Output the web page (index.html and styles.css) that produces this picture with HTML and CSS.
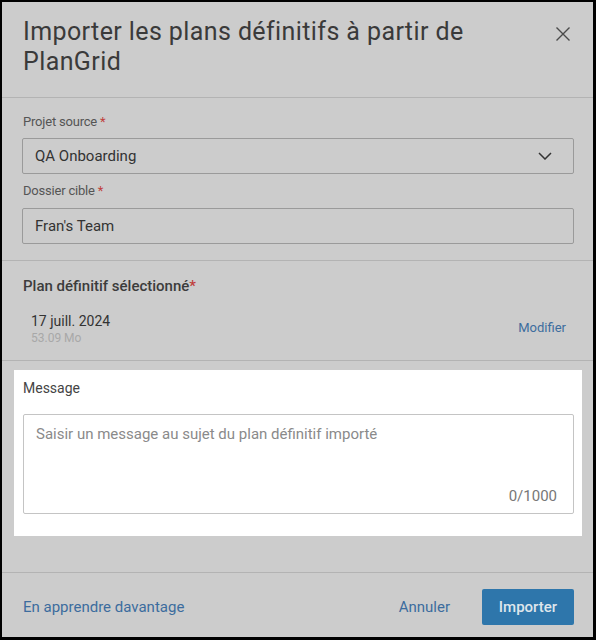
FILE: index.html
```html
<!DOCTYPE html>
<html lang="fr">
<head>
<meta charset="utf-8">
<title>Importer les plans définitifs</title>
<link rel="stylesheet" href="styles.css">
</head>
<body>
<div class="dialog">
  <header class="header">
    <h1 class="title">Importer les plans définitifs à partir de PlanGrid</h1>
    <button class="close" aria-label="Fermer">
      <svg width="16" height="16" viewBox="0 0 16 16"><path d="M1.5 1.5 L14.5 14.5 M14.5 1.5 L1.5 14.5" stroke="#4a4a4a" stroke-width="1.4" fill="none"/></svg>
    </button>
  </header>

  <section class="form">
    <label class="label">Projet source <span class="req">*</span></label>
    <div class="field select">
      <span>QA Onboarding</span>
      <svg class="chev" width="14" height="8" viewBox="0 0 14 8"><path d="M1 1 L7 7 L13 1" stroke="#333" stroke-width="1.5" fill="none"/></svg>
    </div>
    <label class="label second">Dossier cible <span class="req">*</span></label>
    <div class="field"><span>Fran's Team</span></div>
  </section>

  <section class="plan">
    <div class="plan-title">Plan définitif sélectionné<span class="req">*</span></div>
    <div class="plan-row">
      <div class="plan-info">
        <div class="plan-date">17 juill. 2024</div>
        <div class="plan-size">53.09 Mo</div>
      </div>
      <a class="link modify">Modifier</a>
    </div>
  </section>

  <section class="message">
    <div class="label msg-label">Message</div>
    <div class="textarea">
      <span class="placeholder">Saisir un message au sujet du plan définitif importé</span>
      <span class="count">0/1000</span>
    </div>
  </section>

  <footer class="footer">
    <a class="link learn">En apprendre davantage</a>
    <div class="actions">
      <a class="link cancel">Annuler</a>
      <button class="primary">Importer</button>
    </div>
  </footer>
</div>
</body>
</html>
```

FILE: styles.css
```css
* { box-sizing: border-box; }
html, body { margin: 0; padding: 0; }
body {
  background: #000;
  padding: 2px 3px 3px 2px;
  font-family: Roboto, "Noto Sans", sans-serif;
  color: #383838;
}
.dialog {
  width: 591px;
  height: 635px;
  background: #cccccc;
  display: flex;
  flex-direction: column;
}
.header {
  display: flex;
  justify-content: space-between;
  align-items: flex-start;
  padding: 15px 22px 20px 21px;
  border-bottom: 1px solid #b3b3b3;
}
.title {
  margin: 0;
  font-weight: 400;
  font-size: 25px;
  letter-spacing: 0.4px;
  line-height: 30px;
  color: #3a3a3a;
  width: 480px;
}
.close {
  border: 0;
  background: none;
  padding: 0;
  margin-top: 9px;
  width: 16px;
  height: 16px;
  display: flex;
}
.form {
  padding: 15px 19px 16px 20px;
  border-bottom: 1px solid #b3b3b3;
  display: flex;
  flex-direction: column;
}
.label {
  font-size: 13px;
  letter-spacing: -0.2px;
  line-height: 18px;
  color: #555;
  margin: 0 0 7px 1px;
}
.label.second { margin-top: 8px; margin-bottom: 8px; }
.req { color: #c0403c; }
.field {
  height: 36px;
  border: 1px solid #9a9a9a;
  border-radius: 2px;
  display: flex;
  align-items: center;
  justify-content: space-between;
  padding: 0 21px 0 12px;
  font-size: 15px;
  color: #333;
}
.chev { display: block; }
.plan {
  padding: 15px 27px 14px 21px;
  border-bottom: 1px solid #b3b3b3;
}
.plan-title {
  font-size: 15px;
  line-height: 20px;
  font-weight: 500;
  color: #3c3c3c;
}
.plan-row {
  display: flex;
  justify-content: space-between;
  align-items: center;
  margin-top: 16px;
  padding-left: 8px;
}
.plan-date { font-size: 14px; line-height: 18px; color: #333; }
.plan-size { font-size: 12px; line-height: 16px; color: #a8a8a8; }
.link {
  color: #3c6c9e;
  font-size: 13px;
  cursor: pointer;
}
.modify { margin-top: -4px; }
.message {
  background: #fff;
  margin: 9px 11px 0 12px;
  padding: 9px 8px 22px 9px;
}
.msg-label { margin: 0 0 17px 0; color: #444; font-size: 14px; letter-spacing: 0; }
.textarea {
  height: 100px;
  border: 1px solid #c4c4c4;
  border-radius: 2px;
  padding: 10px 16px 8px 12px;
  display: flex;
  flex-direction: column;
  justify-content: space-between;
  font-size: 15px;
}
.placeholder { color: #8a8a8a; }
.count { align-self: flex-end; color: #777; font-size: 15px; }
.footer {
  margin-top: auto;
  border-top: 1px solid #b3b3b3;
  height: 65px;
  display: flex;
  align-items: center;
  justify-content: space-between;
  padding: 3px 19px 0 21px;
}
.learn { font-size: 15px; }
.actions { display: flex; align-items: center; gap: 32px; }
.cancel { font-size: 15px; }
.primary {
  width: 92px;
  height: 36px;
  border: 0;
  border-radius: 2px;
  background: #2e76ab;
  color: #dfe6ec;
  font-family: inherit;
  font-size: 15px;
  font-weight: 500;
}
```
